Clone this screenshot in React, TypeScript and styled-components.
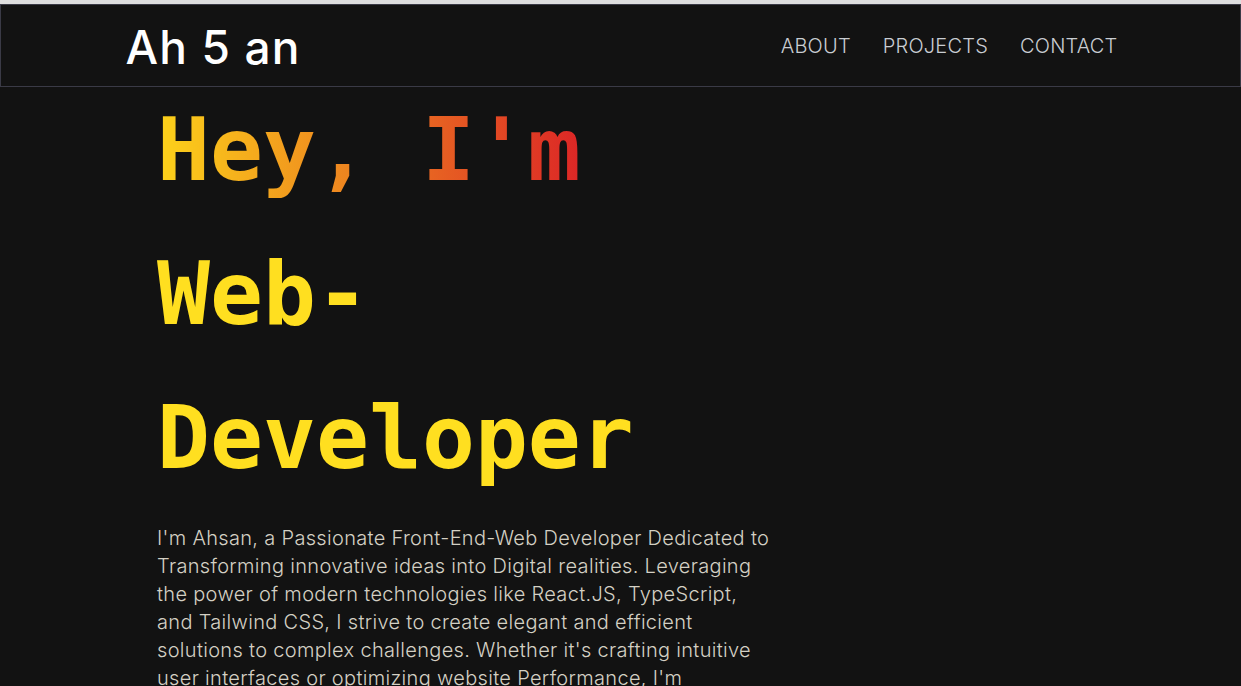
import React from 'react';
import styled, { createGlobalStyle } from 'styled-components';

const GlobalStyle = createGlobalStyle`
    * {
        box-sizing: border-box;
    }

    body {
        margin: 0;
        background: #121212;
        font-family: Inter, 'Noto Sans', sans-serif;
        overflow: hidden;
    }
`;

const Page = styled.div`
    min-height: 100vh;
    border-top: 4px solid #dedede;
    background: #121212;
`;

const Header = styled.header`
    height: 83px;
    border: 1px solid #3a3a46;
    display: flex;
    align-items: center;
`;

const HeaderInner = styled.div`
    width: 990px;
    margin: 0 auto;
    display: flex;
    align-items: center;
    justify-content: space-between;
`;

const Logo = styled.a`
    color: #ffffff;
    font-size: 46px;
    font-weight: 500;
    letter-spacing: 0.025em;
    text-decoration: none;
    line-height: 1;
    margin-top: 2px;
`;

const Nav = styled.nav`
    display: flex;
    gap: 32px;
    margin-right: -2px;
`;

const NavLink = styled.a`
    color: #c9cdd2;
    font-size: 20px;
    font-weight: 300;
    text-decoration: none;
    letter-spacing: 0.01em;
`;

const Hero = styled.main`
    padding-left: 157px;
`;

const Title = styled.h1`
    margin: -9px 0 0;
    font-family: 'DejaVu Sans Mono', monospace;
    font-size: 88px;
    line-height: 144px;
    font-weight: 700;
    color: #ffdf20;
    max-width: 560px;
`;

const Gradient = styled.span`
    background: linear-gradient(to right, #fcd21a, #dc2626);
    -webkit-background-clip: text;
    background-clip: text;
    color: transparent;
`;

const Intro = styled.p`
    margin: 14px 0 0;
    max-width: 616px;
    font-size: 20px;
    line-height: 28px;
    font-weight: 300;
    letter-spacing: 0.32px;
    color: #d4d0c4;
`;

const App: React.FC = () => {
    return (
        <Page>
            <GlobalStyle />
            <Header>
                <HeaderInner>
                    <Logo href="#">Ah 5 an</Logo>
                    <Nav>
                        <NavLink href="#about">ABOUT</NavLink>
                        <NavLink href="#projects">PROJECTS</NavLink>
                        <NavLink href="#contact">CONTACT</NavLink>
                    </Nav>
                </HeaderInner>
            </Header>
            <Hero>
                <Title>
                    <Gradient>Hey, I'm</Gradient> Web-Developer
                </Title>
                <Intro>
                    I'm Ahsan, a Passionate Front-End-Web Developer Dedicated
                    to Transforming innovative ideas into Digital realities.
                    Leveraging the power of modern technologies like
                    React.JS, TypeScript, and Tailwind CSS, I strive to create
                    elegant and efficient solutions to complex challenges.
                    Whether it's crafting intuitive user interfaces or
                    optimizing website Performance, I'm committed to
                    delivering exceptional digital experiences.
                </Intro>
            </Hero>
        </Page>
    );
};

export default App;
